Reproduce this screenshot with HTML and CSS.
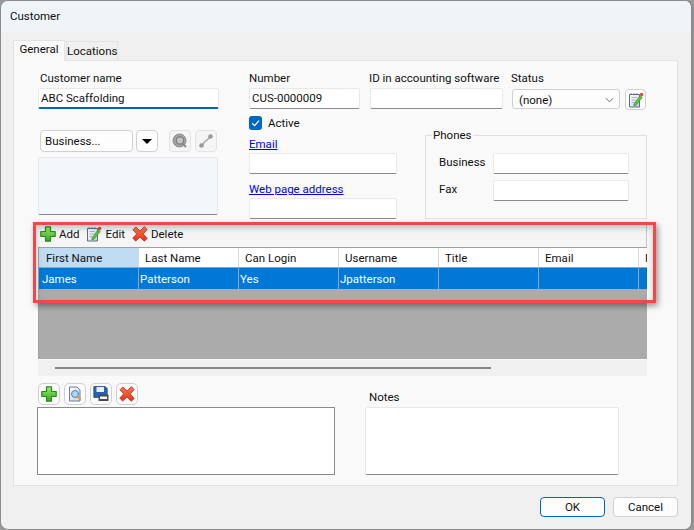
FILE: index.html
```html
<!DOCTYPE html>
<html lang="en">
<head>
<meta charset="utf-8">
<title>Customer</title>
<link rel="stylesheet" href="styles.css">
</head>
<body>
<svg class="defs" width="0" height="0" aria-hidden="true">
  <defs>
    <linearGradient id="gGreen" x1="0" y1="0" x2="0" y2="1"><stop offset="0" stop-color="#9df06a"/><stop offset="1" stop-color="#2fa51e"/></linearGradient>
    <linearGradient id="gRed" x1="0" y1="0" x2="0" y2="1"><stop offset="0" stop-color="#ff7a50"/><stop offset="1" stop-color="#e0301a"/></linearGradient>
    <linearGradient id="gPage" x1="0" y1="0" x2="1" y2="1"><stop offset="0" stop-color="#ffffff"/><stop offset="1" stop-color="#c4d2ea"/></linearGradient>
    <symbol id="i-plus" viewBox="0 0 16 16"><path d="M5.500 .8h5v4.700h4.700v5h-4.700v4.700h-5v-4.700H.8v-5h4.700z" fill="url(#gGreen)" stroke="#2b8a1e" stroke-width="1.200" stroke-linejoin="round"/></symbol>
    <symbol id="i-x" viewBox="0 0 16 16"><path d="M1 3.800 3.800 1l4.200 4 4.300-4.300 2.900 2.700-4 4.500 4 4.600-3 2.700L8 11.100l-4.400 4-2.800-3 3.900-4.200z" fill="url(#gRed)" stroke="#c9341c" stroke-width=".9" stroke-linejoin="round"/></symbol>
    <symbol id="i-edit" viewBox="0 0 16 16"><path d="M1.500 2.500h10v12.500h-10z" fill="url(#gPage)" stroke="#5d6a8c"/><path d="M3 2.500v-1.500M6 2.500v-1.500M9 2.500v-1.500" stroke="#5d6a8c" stroke-width=".8"/><path d="M3.500 5.500h5M3.500 8h4M3.500 10.500h3" stroke="#9aa6c0" stroke-width=".8"/><path d="M6 12 12 3.800l2.200 1.700-6 7.700-2.400.6z" fill="#58c63a" stroke="#2e8a20" stroke-width=".6"/><circle cx="13.600" cy="2.600" r="1.800" fill="#e8473a"/></symbol>
    <symbol id="i-doc" viewBox="0 0 16 16"><path d="M2.500 1h7.500l3 3v11H2.500z" fill="url(#gPage)" stroke="#6a7ba3"/><circle cx="8" cy="8" r="3.500" fill="#a9d8f3" stroke="#4f7fb5"/><path d="m10.500 10.500 3 3" stroke="#ef9238" stroke-width="1.800"/></symbol>
    <symbol id="i-save" viewBox="0 0 16 16"><path d="M.8.5h11.400l2 2v9H.8z" fill="#2461b8" stroke="#1c4c96" stroke-width=".8"/><path d="M3.500 1h7.500v5H3.500z" fill="#e8eef6"/><path d="M5.500 8.500h10v6.500h-10z" fill="#4a4a4a"/><path d="M7 10.500h7v2.500H7z" fill="#f2f2f2"/></symbol>
    <symbol id="i-globe" viewBox="0 0 16 16"><circle cx="7.500" cy="7.500" r="6.500" fill="#a3a3a3" stroke="#8c8c8c"/><circle cx="8" cy="7.500" r="3.600" fill="#c4c4c4" stroke="#7e7e7e" stroke-width="1.200"/><path d="m10.500 10.500 3.500 3.500" stroke="#8c8c8c" stroke-width="2"/></symbol>
    <symbol id="i-link" viewBox="0 0 16 16"><path d="M3.500 12.500c2-.5 2-3 4-4.500s3-2 5-4.500" fill="none" stroke="#a8a8a8" stroke-width="1.500"/><circle cx="3.500" cy="12.500" r="2.300" fill="#9a9a9a"/><circle cx="12.500" cy="3.500" r="2.300" fill="#9a9a9a"/></symbol>
  </defs>
</svg>

<div class="window">
  <header class="titlebar">Customer</header>
  <main class="content">
    <nav class="tabs">
      <span class="tab tab-active">General</span>
      <span class="tab">Locations</span>
    </nav>
    <section class="panel">
      <div class="top">
        <div class="col-left">
          <label class="label">Customer name</label>
          <div class="input input-focus">ABC Scaffolding</div>
          <div class="picker">
            <div class="btn btn-business">Business...</div>
            <div class="btn btn-square"><span class="caret"></span></div>
            <div class="btn btn-square btn-disabled btn-spaced"><svg class="ico"><use href="#i-globe"/></svg></div>
            <div class="btn btn-square btn-disabled"><svg class="ico"><use href="#i-link"/></svg></div>
          </div>
          <div class="address"></div>
        </div>
        <div class="col-right">
          <div class="row-ids">
            <div class="field field-number"><label class="label">Number</label><div class="input">CUS-0000009</div></div>
            <div class="field field-acct"><label class="label label-out">ID in accounting software</label><div class="input"></div></div>
            <div class="field field-status"><label class="label label-out">Status</label>
              <div class="select"><span>(none)</span><svg class="chev" viewBox="0 0 10 6"><path d="M1 1l4 4 4-4" fill="none" stroke="#555" stroke-width="1"/></svg></div>
            </div>
            <div class="btn btn-square btn-status"><svg class="ico"><use href="#i-edit"/></svg></div>
          </div>
          <div class="row-contact">
            <div class="col-contact">
              <div class="check-row"><span class="check"><svg viewBox="0 0 10 10"><path d="M2.500 5.200 4.300 7l3.400-3.800" fill="none" stroke="#fff" stroke-width="1"/></svg></span><span>Active</span></div>
              <a class="link" href="#">Email</a>
              <div class="input"></div>
              <a class="link link-gap" href="#">Web page address</a>
              <div class="input"></div>
            </div>
            <fieldset class="phones">
              <legend>Phones</legend>
              <div class="phone-row"><span class="phone-label">Business</span><div class="input input-phone"></div></div>
              <div class="phone-row"><span class="phone-label">Fax</span><div class="input input-phone"></div></div>
            </fieldset>
          </div>
        </div>
      </div>

      <div class="list">
        <div class="frame"></div>
        <div class="toolbar">
          <span class="tool"><svg class="ico"><use href="#i-plus"/></svg>Add</span>
          <span class="tool"><svg class="ico"><use href="#i-edit"/></svg>Edit</span>
          <span class="tool"><svg class="ico"><use href="#i-x"/></svg>Delete</span>
        </div>
        <div class="grid">
          <div class="grid-row grid-head">
            <span class="cell cell-sel">First Name</span><span class="cell">Last Name</span><span class="cell">Can Login</span><span class="cell">Username</span><span class="cell">Title</span><span class="cell">Email</span><span class="cell">Phone</span>
          </div>
          <div class="grid-row grid-data">
            <span class="cell">James</span><span class="cell">Patterson</span><span class="cell">Yes</span><span class="cell">Jpatterson</span><span class="cell"></span><span class="cell"></span><span class="cell"></span>
          </div>
        </div>
        <div class="hscroll"><span class="thumb"></span></div>
      </div>

      <div class="bottom">
        <div class="col-files">
          <div class="filebar">
            <div class="btn btn-square"><svg class="ico"><use href="#i-plus"/></svg></div>
            <div class="btn btn-square"><svg class="ico"><use href="#i-doc"/></svg></div>
            <div class="btn btn-square"><svg class="ico"><use href="#i-save"/></svg></div>
            <div class="btn btn-square"><svg class="ico"><use href="#i-x"/></svg></div>
          </div>
          <div class="files"></div>
        </div>
        <div class="col-notes">
          <label class="label notes-label">Notes</label>
          <div class="notes"></div>
        </div>
      </div>
    </section>
    <footer class="footer">
      <div class="btn btn-action btn-default">OK</div>
      <div class="btn btn-action">Cancel</div>
    </footer>
  </main>
</div>
</body>
</html>
```
FILE: styles.css
```css
* { box-sizing: border-box; }
html, body { margin: 0; padding: 0; }
body {
  width: 694px; height: 530px; overflow: hidden;
  background: #9a9a9a;
  font-family: Roboto, "Noto Sans", sans-serif;
  font-size: 11.5px; line-height: 16px; color: #111;
}
.defs { position: absolute; }
.window {
  width: 693px; height: 530px;
  border: 1px solid #8b8b8b; border-right-width: 2px;
  border-radius: 8px; overflow: hidden;
  background: #f0f0f0;
  display: flex; flex-direction: column;
}
.titlebar { height: 31px; background: #eff4f9; padding: 7px 0 0 9px; }
.content { flex: 1; padding: 7px 13px 0 12px; display: flex; flex-direction: column; }
.tabs { display: flex; height: 21px; align-items: flex-end; }
.tab {
  height: 19px; padding-top: 1px; margin-left: 1px; width: 52px;
  background: #f0f0f0; border: 1px solid #e3e3e3; border-bottom: 0; text-align: center;
}
.tab-active {
  height: 21px; width: 52px; margin-left: 0; background: #f9f9f9; padding-top: 0;
  position: relative; top: 1px;
}
.panel {
  height: 426px; background: #f9f9f9; border: 1px solid #e3e3e3;
  padding: 10px 0 0 24px;
}
.top { display: flex; }
.col-left { width: 181px; margin-right: 30px; }
.label { display: block; height: 17px; line-height: 15px; padding-left: 2px; white-space: nowrap; }
.label-out { padding-left: 0; margin-left: -1px; }
.input {
  height: 21px; background: #fff; border: 1px solid #e8e8e8; border-bottom: 1px solid #8a8a8a;
  border-radius: 2px; padding: 1px 4px 0 2px; white-space: nowrap;
}
.input-focus { border-bottom: 2px solid #0067c0; }
.picker { display: flex; margin: 21px 0 5px 2px; }
.btn {
  height: 22px; background: #fdfdfd; border: 1px solid #d0d0d0; border-radius: 4px;
  display: flex; align-items: center; justify-content: center;
}
.btn-business { width: 93px; justify-content: flex-start; padding-left: 4px; margin-right: 3px; }
.btn-square { width: 22px; flex: none; }
.btn-spaced { margin: 0 4px 0 11px; }
.btn-disabled { background: #f5f5f5; border-color: #e3e3e3; }
.caret { width: 0; height: 0; border: 5px solid transparent; border-top: 5px solid #000; border-bottom: 0; }
.ico { width: 16px; height: 16px; display: block; flex: none; }
.address { width: 180px; height: 58px; background: #f3f6fa; border: 1px solid #e8e8e8; border-bottom: 1px solid #8a8a8a; border-radius: 2px; }
.col-right { width: 398px; }
.row-ids { display: flex; align-items: flex-start; height: 39px; }
.field-number { width: 111px; margin-right: 10px; }
.field-number .label { padding-left: 0; }
.field-acct { width: 133px; margin-right: 9px; }
.field-status { width: 108px; margin-right: 5px; }
.select {
  margin-top: 1px; height: 20px; background: #fdfdfd; border: 1px solid #d0d0d0; border-radius: 3px;
  display: flex; align-items: center; justify-content: space-between; padding: 1px 5px 0 6px;
}
.chev { width: 9px; height: 6px; }
.btn-status { width: 21px; height: 21px; margin-top: 18px; }
.row-contact { display: flex; }
.col-contact { width: 148px; margin-right: 28px; padding-top: 6px; }
.check-row { display: flex; align-items: center; height: 14px; gap: 6px; margin-bottom: 6px; }
.check { width: 13px; height: 14px; border-radius: 3px; background: #0067c0; display: block; }
.check svg { display: block; width: 13px; height: 14px; }
.link { display: block; height: 17px; color: #0000ee; text-decoration: underline; }
.link-gap { margin-top: 7px; }
.phones {
  width: 222px; height: 92px; margin: 17px 0 0 0; padding: 10px 17px 0 13px; min-width: 0;
  border: 1px solid #dfdfdf;
}
.phones legend { padding: 0 1px; margin-left: -7px; height: 16px; }
.phone-row { display: flex; align-items: flex-start; margin-bottom: 6px; }
.phone-label { width: 54px; padding-top: 1px; flex: none; }
.input-phone { width: 136px; }
.list { position: relative; width: 609px; margin-top: 6px; }
.frame {
  position: absolute; left: -5px; top: -3px; width: 623px; height: 81px;
  border: 3px solid #f44848; box-shadow: 2px 3px 6px rgba(0,0,0,.4), inset 0 3px 6px rgba(0,0,0,.22);
  pointer-events: none; z-index: 2;
}
.toolbar {
  height: 22px; display: flex; align-items: flex-start; padding: 1px 0 0 2px; gap: 7px;
  background: #f5f5f5; border-right: 1px solid #c8c8c8;
}
.tool { display: flex; align-items: center; gap: 3px; }
.grid {
  height: 112px; background: #ababab; overflow: hidden;
  border-top: 1px solid #a0a0a0; border-left: 1px solid #a0a0a0;
}
.grid-row { display: grid; grid-template-columns: repeat(7, 100px); }
.grid-head { height: 20px; background: #fff; border-bottom: 1px solid #a0a0a0; }
.grid-head .cell { padding: 2px 0 0 7px; border-right: 1px solid #d8d8d8; white-space: nowrap; }
.grid-head .cell + .cell { padding-left: 6px; }
.cell-sel { background: #bfdcf2; }
.grid-data { height: 21px; background: #0078d7; color: #fff; }
.grid-data .cell { padding: 3px 0 0 3px; border-right: 1px solid #a0a0a0; white-space: nowrap; }
.grid-data .cell + .cell { padding-left: 1px; }
.hscroll { height: 16px; margin-top: 1px; background: #f0f0f0; padding: 7px 0 0 17px; }
.thumb { display: block; width: 436px; height: 2px; background: #858585; }
.bottom { display: flex; margin-top: 7px; margin-left: -1px; }
.col-files { width: 298px; margin-right: 30px; }
.filebar { display: flex; gap: 4px; margin: 0 0 2px 1px; }
.filebar .btn { width: 22px; border-radius: 5px; }
.files { width: 298px; height: 68px; background: #fff; border: 1px solid #868a91; }
.col-notes { display: flex; flex-direction: column; justify-content: flex-end; width: 254px; }
.notes-label { padding: 1px 0 0 4px; height: 18px; }
.notes { height: 68px; background: #fff; border: 1px solid #e8e8e8; border-bottom: 1px solid #8a8a8a; border-radius: 2px; }
.footer { display: flex; justify-content: flex-end; gap: 8px; padding-top: 11px; }
.btn-action { width: 65px; height: 20px; }
.btn-default { border: 1px solid #0067c0; }
```
